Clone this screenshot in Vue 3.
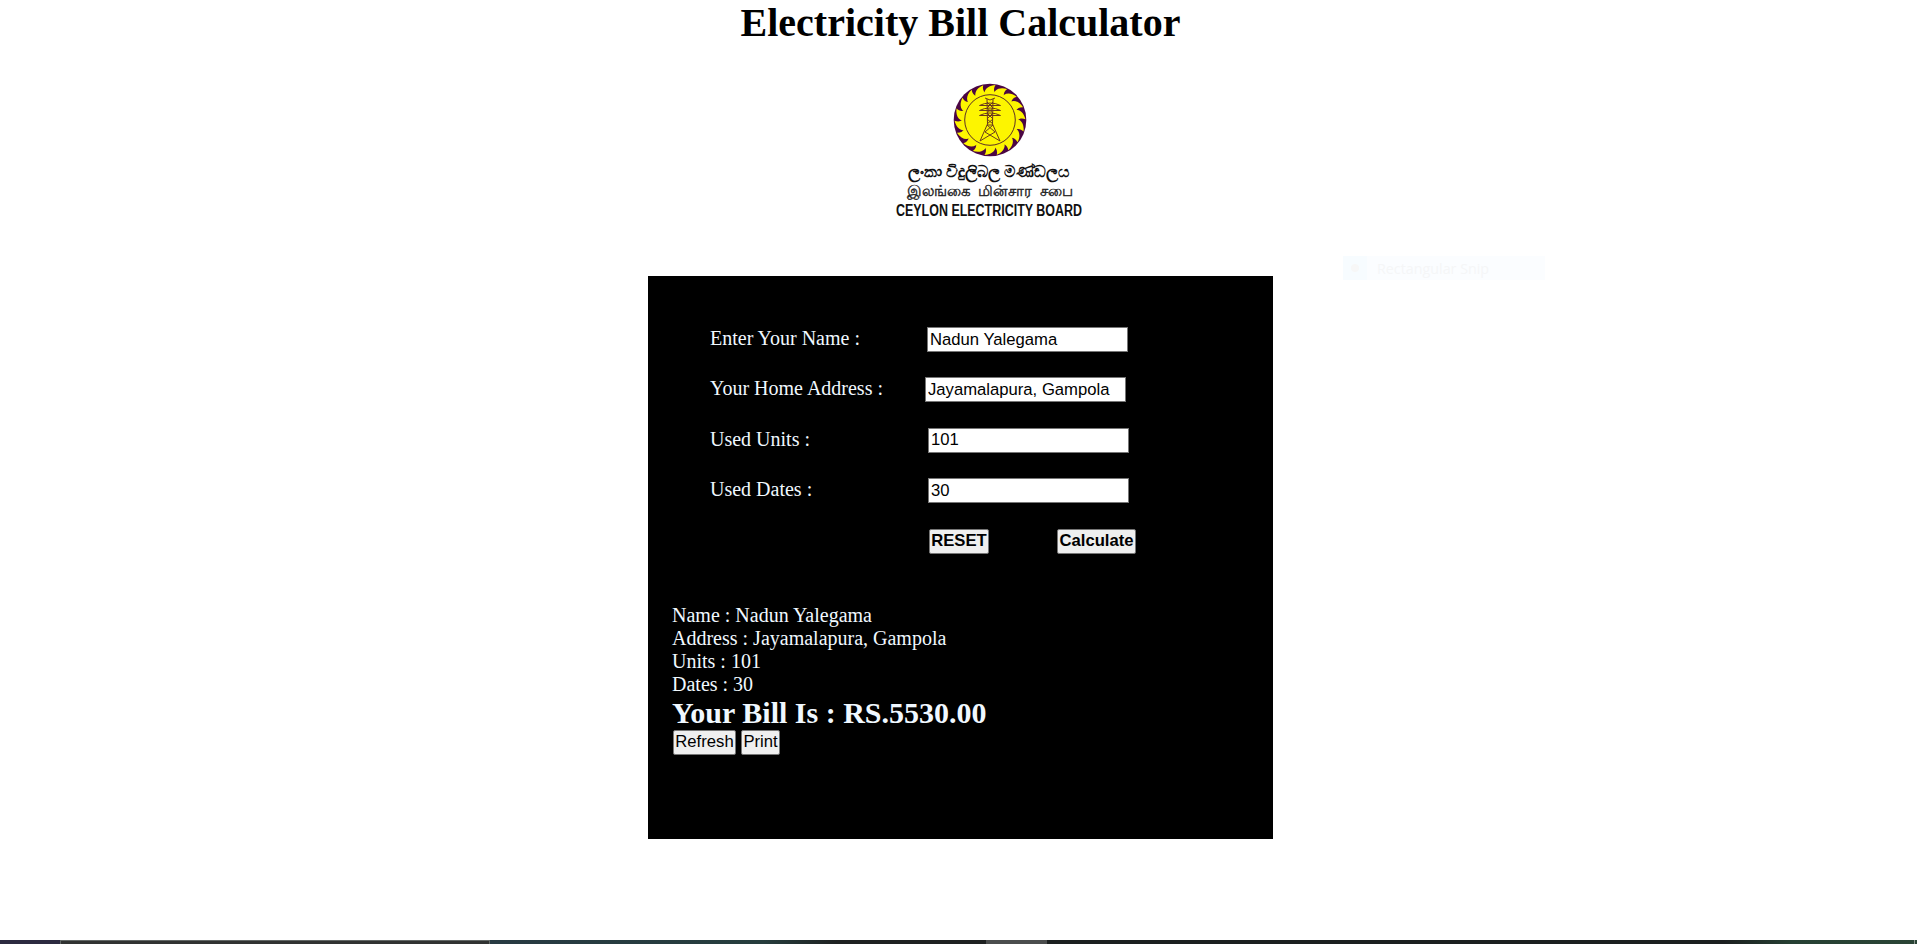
<script setup>
import { ref } from 'vue'

const fields = ref([
  { label: 'Enter Your Name :', value: 'Nadun Yalegama', kind: 'name' },
  { label: 'Your Home Address :', value: 'Jayamalapura, Gampola', kind: 'address' },
  { label: 'Used Units :', value: '101', kind: 'units' },
  { label: 'Used Dates :', value: '30', kind: 'dates' },
])

const teeth = Array.from({ length: 18 }, (_, i) => i * 20)
</script>

<template>
  <div class="page">
    <h1>Electricity Bill Calculator</h1>

    <div class="logo">
      <svg width="74" height="74" viewBox="-37 -37 74 74">
        <circle r="36.300" fill="#4b0643" />
        <path
          v-for="angle in teeth"
          :key="angle"
          :transform="`rotate(${angle})`"
          d="M-5.500 -24C-6.500 -29 -3.500 -34.500 5.500 -35C3.800 -32.500 3.400 -29.500 5 -27L5 -24Z"
          fill="#fdf500"
        />
        <circle r="25.300" fill="#fdf500" stroke="#5d3225" stroke-width="1" />
        <g fill="none" stroke="#6b3c1c" stroke-width="1">
          <path d="M-3 -21L-2.500 4L-10 21M3 -21L2.500 4L10 21M-5 -22L0 -20L5 -22" />
          <path d="M-3 -18L3 -12L-3 -7L3 -1L-3 4M3 -18L-3 -12L3 -7L-3 -1L3 4" />
          <path d="M-10.500 -14.500Q-6 -17 0 -17Q6 -17 10.500 -14.500M-10.500 -9.500Q-6 -12 0 -12Q6 -12 10.500 -9.500M-10.500 -4.500Q-6 -7 0 -7Q6 -7 10.500 -4.500" />
          <path d="M-10.500 -14.500H10.500M-10.500 -9.500H10.500M-10.500 -4.500H10.500M-3 5H3M-3 5L5 12L-10 21M3 5L-5 12L10 21" />
        </g>
      </svg>
      <svg class="logo-text" width="220" height="20" viewBox="0 0 220 20">
        <text x="28" y="19" font-size="16" font-weight="700" textLength="162" lengthAdjust="spacingAndGlyphs">ලංකා විදුලිබල මණ්ඩලය</text>
      </svg>
      <p class="tamil">இலங்கை மின்சார சபை</p>
      <svg class="logo-text" width="220" height="20" viewBox="0 0 220 20">
        <text x="16" y="16" font-size="16" font-weight="700" textLength="186" lengthAdjust="spacingAndGlyphs">CEYLON ELECTRICITY BOARD</text>
      </svg>
    </div>

    <main class="panel">
      <form class="form" @submit.prevent>
        <div v-for="field in fields" :key="field.kind" class="row">
          <label :for="field.kind">{{ field.label }}</label>
          <input :id="field.kind" v-model="field.value" :class="field.kind" type="text" />
        </div>
        <div class="actions">
          <button class="reset" type="button">RESET</button>
          <button class="calculate" type="button">Calculate</button>
        </div>
      </form>

      <section class="result">
        <p>Name : Nadun Yalegama</p>
        <p>Address : Jayamalapura, Gampola</p>
        <p>Units : 101</p>
        <p>Dates : 30</p>
        <h2>Your Bill Is : RS.5530.00</h2>
        <div class="result-actions">
          <button class="refresh" type="button">Refresh</button>
          <button class="print" type="button">Print</button>
        </div>
      </section>
    </main>

    <div class="snip"><span class="dot"><i></i></span><span class="snip-label">Rectangular Snip</span></div>

    <div class="taskbar">
      <span class="start"></span>
      <span class="search"></span>
      <span class="left"></span>
      <span class="active"></span>
      <span class="right"></span>
    </div>
  </div>
</template>

<style>
html,
body {
  margin: 0;
  background: #fff;
}
</style>

<style scoped>
* {
  box-sizing: border-box;
  margin: 0;
}
.page {
  position: relative;
  display: flex;
  flex-direction: column;
  align-items: center;
  height: 944px;
  overflow: hidden;
  font-family: "Liberation Serif", "Times New Roman", serif;
}
h1 {
  height: 46px;
  margin-left: 4px;
  font-size: 40px;
  line-height: 46px;
  color: #000;
}
.logo {
  display: flex;
  flex: none;
  flex-direction: column;
  align-items: center;
  width: 220px;
  height: 150px;
  padding-top: 7.500px;
  margin: 29px 0 51px 63px;
}
.logo svg {
  flex: none;
  overflow: visible;
}
.logo-text {
  margin-top: 1px;
  font-family: "Liberation Sans", "Noto Sans", sans-serif;
  fill: #111;
}
.tamil {
  height: 21px;
  padding-top: 3px;
  color: #222;
  font: 15px/20px "Liberation Sans", "Noto Sans", sans-serif;
  white-space: nowrap;
  word-spacing: 3px;
  -webkit-text-stroke: 0.4px #222;
}
.panel {
  flex: none;
  width: 625px;
  height: 563px;
  margin-left: 4px;
  padding: 51px 25px 0 24px;
  background: #000;
  color: aliceblue;
  font-size: 20px;
  line-height: 23px;
}
.form {
  padding-left: 38px;
}
.row {
  display: flex;
  align-items: center;
  height: 25px;
  margin-bottom: 25.400px;
}
label {
  width: 217px;
  padding-bottom: 2px;
}
input {
  width: 201px;
  height: 25px;
  padding: 0 2px;
  border: 1px solid #767676;
  border-radius: 0;
  background: #fff;
  color: #000;
  font: 16.667px "Liberation Sans", Arial, sans-serif;
}
.address {
  margin-left: -2px;
}
.units,
.dates {
  margin-left: 1px;
}
button {
  height: 25px;
  padding: 0;
  border: 1px solid #767676;
  border-radius: 2px;
  background: #efefef;
  color: #000;
  font: 16.667px "Liberation Sans", Arial, sans-serif;
}
.actions {
  display: flex;
  gap: 68px;
  padding-left: 219px;
}
.actions button {
  padding-bottom: 1px;
  font-weight: 700;
}
.reset {
  width: 60px;
}
.calculate {
  width: 79px;
}
.result {
  margin-top: 50.400px;
}
h2 {
  height: 34px;
  font-size: 30px;
  line-height: 33px;
}
.result-actions {
  display: flex;
  gap: 5px;
  padding-left: 1px;
}
.refresh {
  width: 63px;
}
.print {
  width: 39px;
}
.snip {
  position: absolute;
  top: 256px;
  left: 1343px;
  display: flex;
  width: 202px;
  height: 24px;
  background: #fbfdff;
}
.dot {
  display: flex;
  align-items: center;
  justify-content: center;
  width: 24px;
  background: #f7fcff;
}
.dot i {
  width: 8px;
  height: 8px;
  border-radius: 50%;
  background: #f7f7f7;
}
.snip-label {
  padding-left: 10px;
  color: #f5f6f7;
  font: 14.300px/25px "Open Sans", "Noto Sans", sans-serif;
}
.taskbar {
  display: flex;
  align-self: stretch;
  height: 4px;
  margin-top: auto;
}
.start {
  width: 60px;
  background: #2c2a40;
}
.search {
  width: 430px;
  border: 1px solid #626765;
  border-bottom: 0;
  background: #303231;
}
.left {
  width: 496px;
  background: linear-gradient(90deg, #273a42, #263d3d 55%, #1e2121 70%);
}
.active {
  width: 61px;
  background: #4b4d4d;
}
.right {
  flex: 1;
  margin-right: 2px;
  border-right: 1px solid #8b9690;
  background: linear-gradient(90deg, #1b1f1f 78%, #264033 86%, #2a4435);
  box-shadow: 2px 0 #2a4435;
}
</style>
